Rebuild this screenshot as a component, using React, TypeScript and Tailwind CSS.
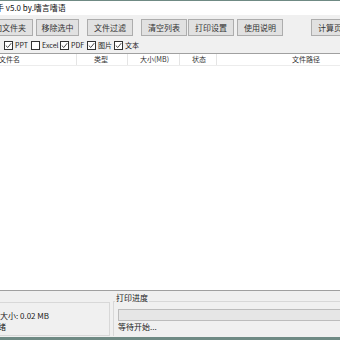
import React from "react";

const font = { fontFamily: '"Noto Sans CJK SC", "Liberation Sans", sans-serif' };

function Btn({ label, w, ml }: { label: string; w: string; ml?: string }) {
  return (
    <div
      className={`h-[17px] ${w} ${ml ?? ""} shrink-0 border border-[#adadad] bg-[#e1e1e1] flex items-center justify-center text-[8px] text-[#333]`}
    >
      {label}
    </div>
  );
}

function Check({ label, checked, w }: { label: string; checked: boolean; w: string }) {
  return (
    <div className={`${w} shrink-0 flex items-center gap-[2px] text-[7px] text-[#222]`}>
      <div className="w-[9px] h-[9px] shrink-0 border border-[#333] bg-white flex items-center justify-center">
        {checked && (
          <svg width="7" height="7" viewBox="0 0 7 7">
            <path d="M0.8 3.6 L2.8 5.5 L6.2 1.2" fill="none" stroke="#333" strokeWidth="0.9" />
          </svg>
        )}
      </div>
      <span className="whitespace-nowrap">{label}</span>
    </div>
  );
}

export default function App() {
  return (
    <div
      className="w-[340px] h-[340px] overflow-hidden bg-[#f0f0f0] flex flex-col border-t border-[#6f8a84]"
      style={font}
    >
      <div className="h-[14px] bg-white flex items-center text-[8px] text-[#111] shrink-0">
        <span className="-ml-[4px]">手 v5.0 by.嗜言嗜语</span>
      </div>
      <div className="flex items-center h-[22px] shrink-0 pt-[3px]">
        <Btn label="添加文件夹" w="w-[54px]" ml="-ml-[21px]" />
        <Btn label="移除选中" w="w-[43px]" ml="ml-[3px]" />
        <Btn label="文件过滤" w="w-[46px]" ml="ml-[8px]" />
        <Btn label="清空列表" w="w-[46px]" ml="ml-[8px]" />
        <Btn label="打印设置" w="w-[46px]" ml="ml-[1px]" />
        <Btn label="使用说明" w="w-[46px]" ml="ml-[3px]" />
        <Btn label="计算页数" w="w-[46px]" ml="ml-[28px]" />
      </div>
      <div className="flex items-center h-[16px] shrink-0 pl-[4px]">
        <Check label="PPT" checked w="w-[27px]" />
        <Check label="Excel" checked={false} w="w-[29px]" />
        <Check label="PDF" checked w="w-[27px]" />
        <Check label="图片" checked w="w-[27px]" />
        <Check label="文本" checked w="w-[27px]" />
      </div>
      <div className="h-[238px] shrink-0 bg-white border-y border-[#a0a0a0] -ml-[1px] flex flex-col">
        <div className="h-[12px] flex text-[7px] text-[#333] border-b border-[#ececec]">
          <div className="w-[78px] border-r border-[#e5e5e5] flex items-center">
            <span>文件名</span>
          </div>
          <div className="w-[51px] border-r border-[#e5e5e5] flex items-center pl-[17px]">类型</div>
          <div className="w-[52px] border-r border-[#e5e5e5] flex items-center pl-[12px]">大小(MB)</div>
          <div className="w-[37px] border-r border-[#e5e5e5] flex items-center pl-[12px]">状态</div>
          <div className="flex-1 flex items-center pl-[75px]">文件路径</div>
        </div>
      </div>
      <div className="flex-1 flex pb-[1px]">
        <div className="w-[112px] -ml-[2px] mt-[11px] border border-[#d8d8d8] flex flex-col justify-center gap-[1px] pt-[4px] text-[8px] text-[#222]">
          <span className="ml-[1px] leading-[10px]">大小: 0.02 MB</span>
          <span className="-ml-[9px] leading-[10px]">就绪</span>
        </div>
        <div className="flex-1 ml-[3px] flex flex-col text-[8px] text-[#222] pt-[2px]">
          <span className="relative z-10 self-start bg-[#f0f0f0] ml-[2px] px-[1px] leading-[10px]">打印进度</span>
          <div className="flex-1 -mt-[2px] border-l border-t border-[#d8d8d8] pl-[4px] pt-[7px] flex flex-col">
            <div className="h-[12px] bg-[#e6e6e6] border border-[#bcbcbc] border-r-0"></div>
            <span className="mt-[1px] leading-[10px]">等待开始...</span>
          </div>
        </div>
      </div>
      <div className="h-[3px] bg-[#6f8a84] shrink-0" />
    </div>
  );
}
